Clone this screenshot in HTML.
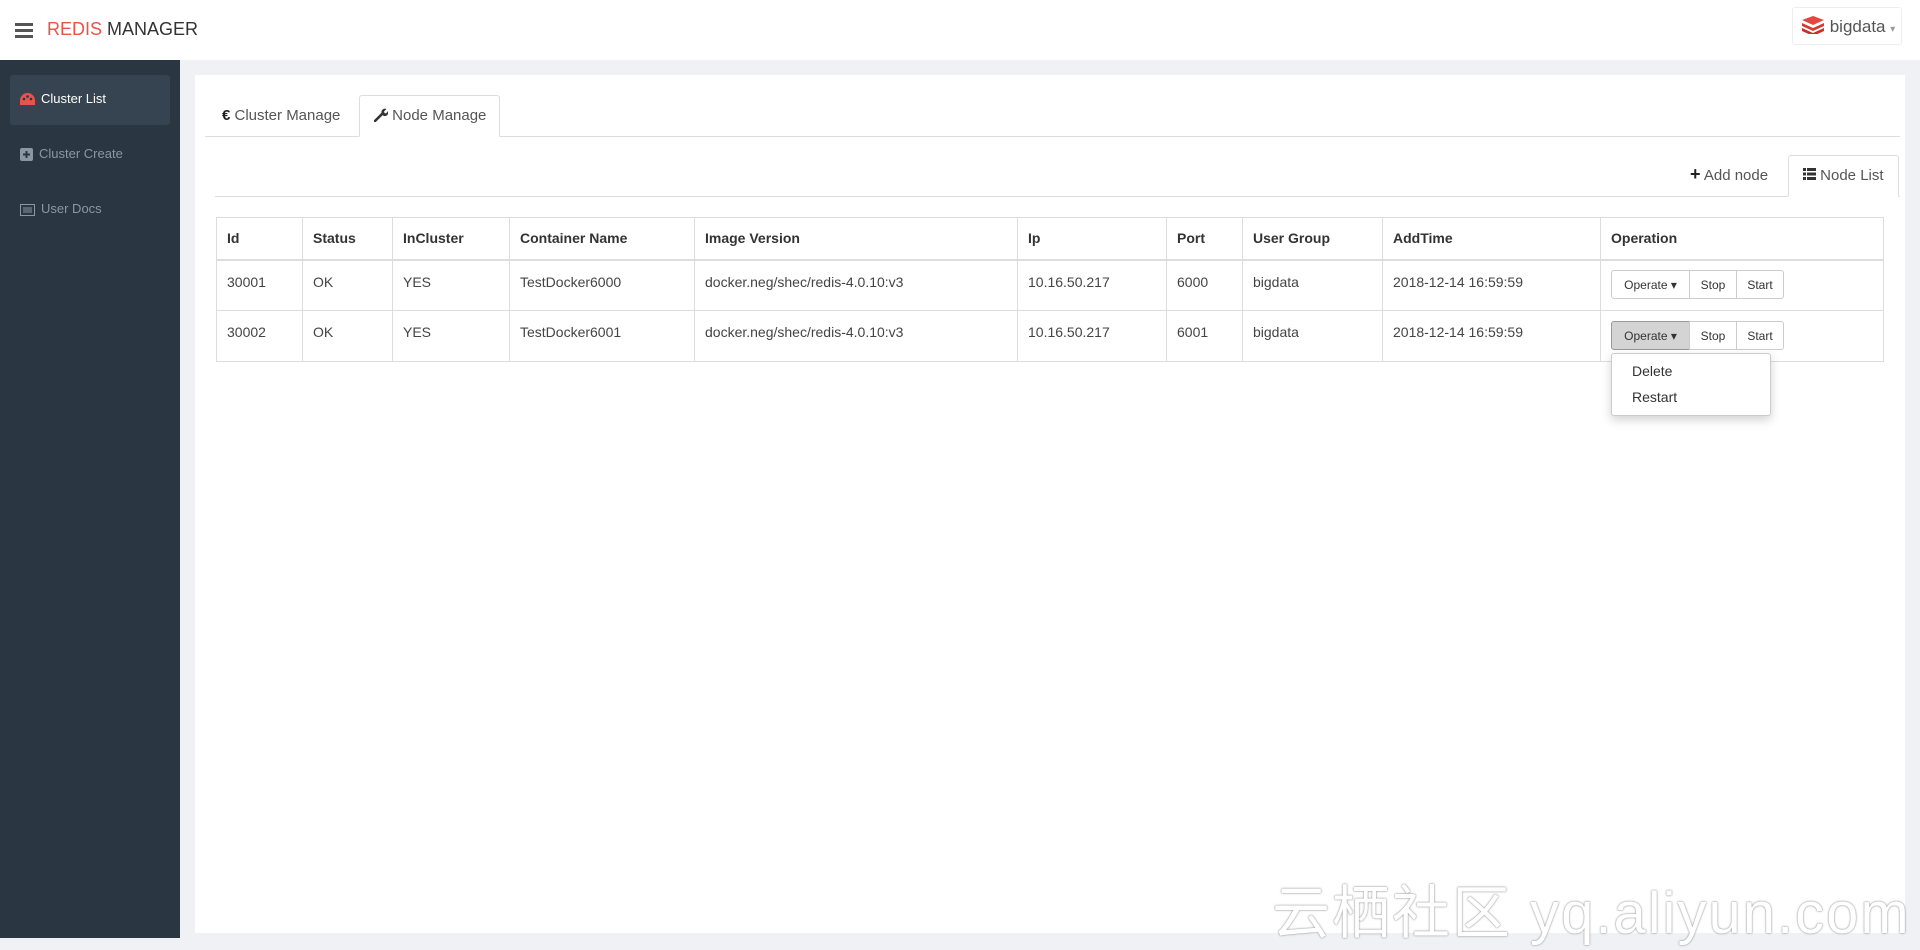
<!DOCTYPE html>
<html><head><meta charset="utf-8"><style>
*{box-sizing:border-box;margin:0;padding:0}
body{width:1920px;height:938px;overflow:hidden;background:#eff1f4;font-family:"Liberation Sans","Noto Sans CJK SC",sans-serif;color:#333;position:relative}
.hdr{position:absolute;left:0;top:0;width:1920px;height:60px;background:#fff}
.burger{position:absolute;left:15px;top:23px;width:18px}
.burger i{display:block;height:3px;background:#555;margin-bottom:3px}
.brand{position:absolute;left:47px;top:19px;font-size:18px;color:#333}
.brand span{color:#e8534a}
.user{position:absolute;left:1792px;top:7px;width:110px;height:38px;border:1px solid #eee;border-radius:3px;font-size:17px;color:#555;padding:8px 0 0 8px}
.side{position:absolute;left:0;top:60px;width:180px;height:878px;background:#2b3643}
.si{position:absolute;left:10px;width:160px;height:50px;font-size:13px;color:#8b97a3;padding:16px 0 0 10px}
.si.act{background:#364350;border-radius:3px;color:#fff}
.si svg{vertical-align:-3px;margin-right:6px}
.card{position:absolute;left:195px;top:75px;width:1710px;height:858px;background:#fff}
.tabline{position:absolute;left:205px;top:136px;width:1695px;height:1px;background:#ddd}
.tab{position:absolute;font-size:15px;color:#555}
.ntab{position:absolute;left:359px;top:95px;width:141px;height:42px;border:1px solid #ddd;border-bottom:1px solid #fff;border-radius:3px 3px 0 0;background:#fff}
.line2{position:absolute;left:215px;top:196px;width:1685px;height:1px;background:#ddd}
.ltab{position:absolute;left:1788px;top:155px;width:111px;height:42px;border:1px solid #ddd;border-bottom:1px solid #fff;border-radius:3px 3px 0 0;background:#fff}
table{position:absolute;left:216px;top:217px;width:1668px;border-collapse:collapse;font-size:14px}
td,th{border:1px solid #ddd;text-align:left;padding:0 10px;vertical-align:top}
th{height:42px;font-weight:bold;vertical-align:middle;border-bottom:2px solid #ddd}
td{height:51px;padding-top:13px;color:#444}
.btns{position:absolute;font-size:12px;color:#333}
.b{position:absolute;height:29px;border:1px solid #ccc;background:#fff;text-align:center;padding-top:7px}
.dd{position:absolute;left:1611px;top:353px;width:160px;height:63px;background:#fff;border:1px solid #ccc;border-radius:3px;box-shadow:0 4px 10px rgba(0,0,0,.18);font-size:14px}
.wm{position:absolute;left:1272px;top:866px;font-size:58px;color:#fff;text-shadow:0 0 2px #999,0 0 1px #888;letter-spacing:2px;white-space:nowrap}
</style></head><body>
<div class="hdr">
<div class="burger"><i></i><i></i><i></i></div>
<div class="brand"><span>REDIS</span> MANAGER</div>
<div class="user"><svg width="24" height="18" viewBox="0 0 24 18" style="vertical-align:-2px"><path d="M1 12l11 5 11-5v3l-11 5-11-5z" fill="#c8302b"/><path d="M1 7l11 5 11-5v3l-11 5-11-5z" fill="#d33a32"/><path d="M1 4l11-4 11 4-11 5z" fill="#e5473f"/></svg> bigdata <span style="font-size:10px;color:#999">▾</span></div>
</div>
<div class="side">
<div class="si act" style="top:15px"><svg width="15" height="13" viewBox="0 0 15 13"><path d="M7.5 0A7.5 7.5 0 0 0 0 7.5V12h15V7.5A7.5 7.5 0 0 0 7.5 0z" fill="#e8534a"/><circle cx="4" cy="6" r="1.3" fill="#2b3643"/><circle cx="7.5" cy="3.5" r="1.3" fill="#2b3643"/><circle cx="11" cy="6" r="1.3" fill="#2b3643"/></svg>Cluster List</div>
<div class="si" style="top:70px"><svg width="13" height="13" viewBox="0 0 13 13"><rect width="13" height="13" rx="2" fill="#8b97a3"/><path d="M6.5 3v7M3 6.5h7" stroke="#2b3643" stroke-width="2"/></svg>Cluster Create</div>
<div class="si" style="top:125px"><svg width="15" height="12" viewBox="0 0 15 12"><rect x=".5" y=".5" width="14" height="11" fill="none" stroke="#8b97a3"/><path d="M3 4h9M3 6h9M3 8h9" stroke="#8b97a3"/></svg>User Docs</div>
</div>
<div class="card"></div>
<div class="tabline"></div>
<div class="ntab"></div>
<div class="tab" style="left:222px;top:107px"><b style="color:#222">€</b> Cluster Manage</div>
<div class="tab" style="left:374px;top:107px"><svg width="14" height="14" viewBox="0 0 14 14" style="vertical-align:-2px"><path d="M1 13l7-7" stroke="#333" stroke-width="2.6" stroke-linecap="round"/><path d="M8 6a3.5 3.5 0 0 1 4.5-5L10 3.5l.5 1.5 1.5.5L14 3a3.5 3.5 0 0 1-5 4.5z" fill="#333"/></svg> Node Manage</div>
<div class="line2"></div>
<div class="ltab"></div>
<div class="tab" style="left:1690px;top:167px"><b style="font-size:18px;line-height:10px;color:#222">+</b> Add node</div>
<div class="tab" style="left:1803px;top:167px"><svg width="13" height="12" viewBox="0 0 13 12"><path d="M0 0h3v3H0zM4 0h9v3H4zM0 4.5h3v3H0zM4 4.5h9v3H4zM0 9h3v3H0zM4 9h9v3H4z" fill="#333"/></svg> Node List</div>
<table>
<tr><th style="width:86px">Id</th><th style="width:90px">Status</th><th style="width:117px">InCluster</th><th style="width:185px">Container Name</th><th style="width:323px">Image Version</th><th style="width:149px">Ip</th><th style="width:76px">Port</th><th style="width:140px">User Group</th><th style="width:218px">AddTime</th><th>Operation</th></tr>
<tr><td>30001</td><td>OK</td><td>YES</td><td>TestDocker6000</td><td>docker.neg/shec/redis-4.0.10:v3</td><td>10.16.50.217</td><td>6000</td><td>bigdata</td><td>2018-12-14 16:59:59</td><td></td></tr>
<tr><td>30002</td><td>OK</td><td>YES</td><td>TestDocker6001</td><td>docker.neg/shec/redis-4.0.10:v3</td><td>10.16.50.217</td><td>6001</td><td>bigdata</td><td>2018-12-14 16:59:59</td><td></td></tr>
</table>
<div class="btns">
<div class="b" style="left:1611px;top:270px;width:79px;border-radius:3px 0 0 3px">Operate ▾</div>
<div class="b" style="left:1689px;top:270px;width:48px">Stop</div>
<div class="b" style="left:1736px;top:270px;width:48px;border-radius:0 3px 3px 0">Start</div>
<div class="b" style="left:1611px;top:321px;width:79px;border-radius:3px 0 0 3px;background:#d4d4d4;border-color:#999">Operate ▾</div>
<div class="b" style="left:1689px;top:321px;width:48px">Stop</div>
<div class="b" style="left:1736px;top:321px;width:48px;border-radius:0 3px 3px 0">Start</div>
</div>
<div class="dd"><div style="position:absolute;left:20px;top:9px">Delete</div><div style="position:absolute;left:20px;top:35px">Restart</div></div>
<div class="wm">云栖社区 yq.aliyun.com</div>
</body></html>
